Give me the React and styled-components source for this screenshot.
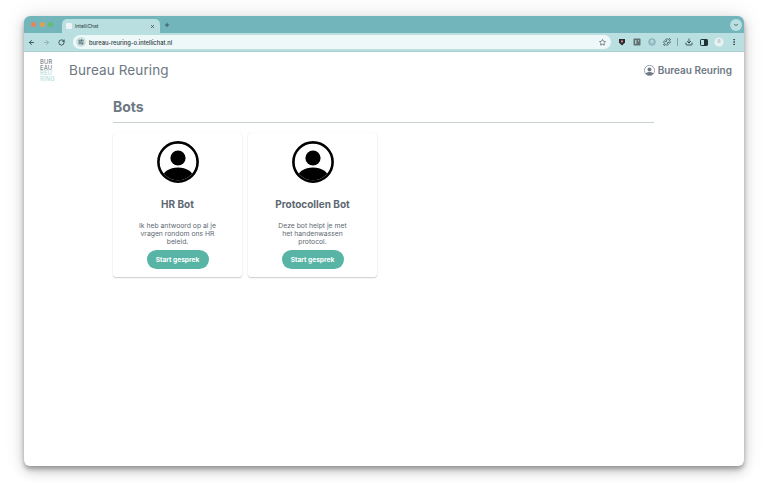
import React from "react";
import styled, { createGlobalStyle } from "styled-components";
import { ArrowLeft, ArrowRight, RotateCw, Star, X, Plus, ChevronDown, Download, EllipsisVertical, SlidersHorizontal, Puzzle } from "lucide-react";

const Global = createGlobalStyle`
  html, body { margin: 0; padding: 0; background: #fff; }
  body { font-family: Inter, "Noto Sans", sans-serif; }
`;
const Page = styled.div`
  box-sizing: border-box; width: 768px; height: 497px; padding: 16px 24px 31px; overflow: hidden;
`;
const Window = styled.div`
  height: 450px; display: flex; flex-direction: column; background: #fff; border-radius: 6px; overflow: hidden;
  box-shadow: 0 3px 4px rgba(0,0,0,.28), 0 6px 12px rgba(0,0,0,.16), 0 0 20px rgba(0,0,0,.12);
`;
const TabStrip = styled.div`
  height: 17px; flex: none; background: #72b5bb; display: flex; align-items: flex-end; position: relative; padding-left: 7px;
`;
const Lights = styled.div`
  display: flex; gap: 3.5px; align-self: center; width: 31px; flex: none;
`;
const Light = styled.span`
  width: 5px; height: 5px; border-radius: 50%; background: ${p => p.$c};
`;
const Tab = styled.div`
  width: 98px; height: 14px; background: #b9dfe0; border-radius: 5px 5px 0 0; display: flex; align-items: center;
  padding: 0 5px 0 4px; box-sizing: border-box; gap: 3px; font-size: 5px; color: #2c3a3d;
`;
const Favicon = styled.span`
  width: 6px; height: 6px; background: #eef3f3; border-radius: 1px; flex: none;
`;
const TabTitle = styled.span`flex: 1;`;
const PlusWrap = styled.span`
  display: flex; margin-left: 4px; align-self: center; color: #23383c;
`;
const Chevron = styled.span`
  margin-left: auto; margin-right: 2px; align-self: center; width: 12px; height: 12px; border-radius: 50%; background: #b9dfe0;
  display: flex; align-items: center; justify-content: center; color: #23383c;
`;
const Toolbar = styled.div`
  height: 19px; flex: none; background: #b9dfe0; display: flex; align-items: center; color: #1f3336; border-bottom: 1px solid #a9cfd0; box-sizing: border-box;
`;
const NavIcon = styled.span`
  width: 15px; display: flex; justify-content: center; flex: none; color: ${p => p.$dim ? "#7d9ca0" : "#1f3336"};
`;
const Omnibox = styled.div`
  width: 538px; height: 14px; margin-left: 4px; border-radius: 7px; background: #eef8f8; display: flex; align-items: center; flex: none;
  box-sizing: border-box; padding: 0 5px 0 3px; font-size: 5.8px; color: #2a3b3f; font-weight: 500;
`;
const Secure = styled.span`
  width: 10px; height: 10px; border-radius: 50%; background: #c9e3e4; display: flex; align-items: center; justify-content: center; margin-right: 3px;
`;
const Url = styled.span`flex: 1;`;
const Exts = styled.div`
  display: flex; align-items: center; margin-left: 3px;
`;
const Sep = styled.span`
  width: 1px; height: 8px; background: #7fa9ad; margin: 0 3px 0 3px;
`;
const Content = styled.div`
  flex: 1; display: flex; flex-direction: column; min-height: 0;
`;
const Header = styled.header`
  height: 36px; display: flex; align-items: center; padding: 0 12px 0 16px; flex: none;
`;
const Logo = styled.div`
  width: 16px; font-size: 5.8px; line-height: 5.5px; letter-spacing: .2px; margin-right: 13px;
`;
const LogoLine = styled.div`
  color: ${p => p.$teal ? "#a6d6d6" : "#5f6a72"};
`;
const Brand = styled.div`
  font-size: 13.5px; color: #6d7883; font-weight: 400; letter-spacing: .1px;
`;
const User = styled.div`
  margin-left: auto; display: flex; align-items: center; gap: 3px; color: #6d7883; font-size: 10px; font-weight: 600;
`;
const Main = styled.main`
  padding: 10px 90px 0 89px;
`;
const Heading = styled.h1`
  margin: 0; font-size: 14px; line-height: 18px; font-weight: 700; color: #6d7883;
`;
const Rule = styled.div`
  height: 1px; background: #c8d0d0; margin-top: 6px;
`;
const Cards = styled.div`
  display: flex; gap: 6px; margin-top: 10px;
`;
const Card = styled.article`
  width: 129px; height: 144px; box-sizing: border-box; padding-top: 8px; border-radius: 3px; background: #fff;
  box-shadow: 0 1px 1.5px rgba(0,0,0,.2), 0 0 1px rgba(0,0,0,.08);
  display: flex; flex-direction: column; align-items: center;
`;
const CardTitle = styled.h2`
  margin: 14px 0 0; font-size: 10px; line-height: 14px; font-weight: 700; color: #5d6872;
`;
const Desc = styled.p`
  margin: 11px 0 0; width: 80px; text-align: center; font-size: 6.8px; line-height: 8.2px; color: #5d6872; height: 25px;
`;
const Start = styled.button`
  margin-top: 3px; width: 62px; height: 19px; border: 0; border-radius: 10px; background: #58b5a6; color: #fff;
  font: 700 6.6px Inter, sans-serif; padding: 0;
`;

const Avatar = ({ size, color = "#000" }) => (
  <svg width={size} height={size} viewBox="0 0 42 42">
    <defs>
      <clipPath id={`c${size}`}><circle cx="21" cy="21" r="18.3" /></clipPath>
    </defs>
    <circle cx="21" cy="21" r="19.6" fill="none" stroke={color} strokeWidth="2.6" />
    <circle cx="21" cy="17" r="7.6" fill={color} />
    <ellipse cx="21" cy="37" rx="15.5" ry="10.5" fill={color} clipPath={`url(#c${size})`} />
  </svg>
);

const Ext = styled.span`
  width: 15px; display: flex; justify-content: center; flex: none;
`;

const bots = [
  { title: "HR Bot", desc: "Ik heb antwoord op al je vragen rondom ons HR beleid." },
  { title: "Protocollen Bot", desc: "Deze bot helpt je met het handenwassen protocol." },
];

export default function App() {
  return (
    <Page>
      <Global />
      <Window>
        <TabStrip>
          <Lights>
            <Light $c="#e5845a" /><Light $c="#e0a04f" /><Light $c="#62bd6f" />
          </Lights>
          <Tab>
            <Favicon /><TabTitle>IntelliChat</TabTitle><X size={5} strokeWidth={3} />
          </Tab>
          <PlusWrap><Plus size={6} strokeWidth={2.5} /></PlusWrap>
          <Chevron><ChevronDown size={6} strokeWidth={3} /></Chevron>
        </TabStrip>
        <Toolbar>
          <NavIcon><ArrowLeft size={7} strokeWidth={2.6} /></NavIcon>
          <NavIcon $dim><ArrowRight size={7} strokeWidth={2.2} /></NavIcon>
          <NavIcon><RotateCw size={7} strokeWidth={2.6} /></NavIcon>
          <Omnibox>
            <Secure><SlidersHorizontal size={6} strokeWidth={2.4} /></Secure>
            <Url>bureau-reuring-o.intellichat.nl</Url>
            <Star size={7} strokeWidth={2} />
          </Omnibox>
          <Exts>
            <Ext>
              <svg width="8" height="8" viewBox="0 0 8 8"><path d="M1 1h6v3.5L4 7.5 1 4.5z" fill="#2b2b2f" /><circle cx="4" cy="3.4" r="1.1" fill="#d88" /></svg>
            </Ext>
            <Ext>
              <svg width="8" height="8" viewBox="0 0 8 8"><rect x=".5" y=".5" width="7" height="7" rx="1" fill="#5f6f72" /><path d="M2 2h1.5v4H2zM5 2h1v1.5H5z" fill="#a9c2c4" /></svg>
            </Ext>
            <Ext>
              <svg width="8" height="8" viewBox="0 0 8 8"><circle cx="4" cy="4" r="3.3" fill="#9fc6cc" stroke="#7ba7b0" strokeWidth=".8" /><path d="M4 2v2.4" stroke="#eaf4f5" strokeWidth=".9" /></svg>
            </Ext>
            <Ext><Puzzle size={8} strokeWidth={2} /></Ext>
            <Sep />
            <Ext><Download size={8} strokeWidth={2.4} /></Ext>
            <Ext>
              <svg width="8" height="7" viewBox="0 0 8 7"><rect x=".5" y=".5" width="7" height="6" rx=".8" fill="none" stroke="#1f3336" /><rect x="4" y=".5" width="3.5" height="6" fill="#1f3336" /></svg>
            </Ext>
            <Ext>
              <svg width="10" height="10" viewBox="0 0 10 10"><circle cx="5" cy="5" r="4.6" fill="#e9f1f1" /><rect x="3.5" y="2" width="3" height="4" fill="#c5d3d4" /></svg>
            </Ext>
            <Ext><EllipsisVertical size={8} strokeWidth={2.4} /></Ext>
          </Exts>
        </Toolbar>
        <Content>
          <Header>
            <Logo>
              <LogoLine>BUR</LogoLine>
              <LogoLine>EAU</LogoLine>
              <LogoLine $teal>REU</LogoLine>
              <LogoLine $teal>RING</LogoLine>
            </Logo>
            <Brand>Bureau Reuring</Brand>
            <User><Avatar size={11} color="#6d7883" />Bureau Reuring</User>
          </Header>
          <Main>
            <Heading>Bots</Heading>
            <Rule />
            <Cards>
              {bots.map(b => (
                <Card key={b.title}>
                  <Avatar size={42} />
                  <CardTitle>{b.title}</CardTitle>
                  <Desc>{b.desc}</Desc>
                  <Start>Start gesprek</Start>
                </Card>
              ))}
            </Cards>
          </Main>
        </Content>
      </Window>
    </Page>
  );
}
